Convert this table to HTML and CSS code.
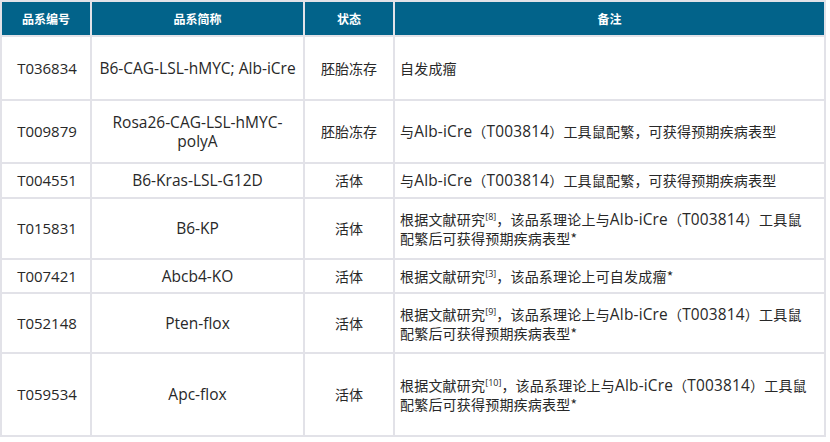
FILE: index.html
```html
<!DOCTYPE html>
<html lang="zh">
<head>
<meta charset="utf-8">
<link rel="stylesheet" href="styles.css">
</head>
<body>
<table class="grid">
  <colgroup>
    <col class="c1"><col class="c2"><col class="c3"><col class="c4">
  </colgroup>
  <thead>
    <tr class="head">
      <th>品系编号</th><th>品系简称</th><th>状态</th><th>备注</th>
    </tr>
  </thead>
  <tbody>
    <tr class="r1">
      <td class="id">T036834</td><td class="lat">B6-CAG-LSL-hMYC; Alb-iCre</td><td class="cjk">胚胎冻存</td><td class="note">自发成瘤</td>
    </tr>
    <tr class="r2">
      <td class="id">T009879</td><td class="lat">Rosa26-CAG-LSL-hMYC-<br>polyA</td><td class="cjk">胚胎冻存</td><td class="note">与<span class="l">Alb-iCre</span>（<span class="l">T003814</span>）工具鼠配繁，可获得预期疾病表型</td>
    </tr>
    <tr class="r3">
      <td class="id">T004551</td><td class="lat">B6-Kras-LSL-G12D</td><td class="cjk">活体</td><td class="note">与<span class="l">Alb-iCre</span>（<span class="l">T003814</span>）工具鼠配繁，可获得预期疾病表型</td>
    </tr>
    <tr class="r4">
      <td class="id">T015831</td><td class="lat">B6-KP</td><td class="cjk">活体</td><td class="note">根据文献研究<sup>[8]</sup>，该品系理论上与<span class="l">Alb-iCre</span>（<span class="l">T003814</span>）工具鼠配繁后可获得预期疾病表型*</td>
    </tr>
    <tr class="r5">
      <td class="id">T007421</td><td class="lat">Abcb4-KO</td><td class="cjk">活体</td><td class="note">根据文献研究<sup>[3]</sup>，该品系理论上可自发成瘤*</td>
    </tr>
    <tr class="r6">
      <td class="id">T052148</td><td class="lat">Pten-flox</td><td class="cjk">活体</td><td class="note">根据文献研究<sup>[9]</sup>，该品系理论上与<span class="l">Alb-iCre</span>（<span class="l">T003814</span>）工具鼠配繁后可获得预期疾病表型*</td>
    </tr>
    <tr class="r7">
      <td class="id">T059534</td><td class="lat">Apc-flox</td><td class="cjk">活体</td><td class="note">根据文献研究<sup>[10]</sup>，该品系理论上与<span class="l">Alb-iCre</span>（<span class="l">T003814</span>）工具鼠配繁后可获得预期疾病表型*</td>
    </tr>
  </tbody>
</table>
</body>
</html>
```
FILE: styles.css
```css
html, body {
  margin: 0;
  padding: 0;
  background: #ffffff;
}
body {
  font-family: "Open Sans", "Noto Sans CJK SC", sans-serif;
  color: #282828;
}
.grid {
  border-collapse: collapse;
  table-layout: fixed;
  width: 824px;
  margin: 0;
}
.c1 { width: 90px; }
.c2 { width: 213px; }
.c3 { width: 90px; }
.c4 { width: 431px; }
.grid th, .grid td {
  border: 2px solid #e2e2e8;
  padding: 0 4px;
  text-align: center;
  vertical-align: middle;
  font-size: 14px;
  line-height: 19px;
}
.grid th {
  background: #02638a;
  color: #ffffff;
  font-size: 12px;
  font-weight: bold;
  font-family: "Noto Sans CJK SC", sans-serif;
}
.grid td.id {
  font-family: "Open Sans", sans-serif;
  font-size: 15px;
  padding-left: 6px;
}
.grid td.lat {
  font-family: "Open Sans", "Noto Sans CJK SC", sans-serif;
  font-size: 15.5px;
}
.grid td.cjk {
  font-family: "Noto Sans CJK SC", sans-serif;
  font-size: 14px;
}
.grid td.note {
  text-align: left;
  padding-left: 5px;
  padding-right: 10px;
  font-family: "Noto Sans CJK SC", sans-serif;
  font-size: 14px;
  line-height: 18px;
  letter-spacing: 0.2px;
}
.note .l {
  font-family: "Open Sans", sans-serif;
  font-size: 15.4px;
}
.grid sup {
  font-family: "Open Sans", sans-serif;
  font-size: 9px;
  line-height: 0;
  vertical-align: 5px;
  letter-spacing: 0;
}
.head { height: 35px; }
.r1 { height: 64px; }
.r2 { height: 63px; }
.r3 { height: 35px; }
.r4 { height: 61px; }
.r5 { height: 34px; }
.r6 { height: 60px; }
.r7 { height: 83px; }
```
